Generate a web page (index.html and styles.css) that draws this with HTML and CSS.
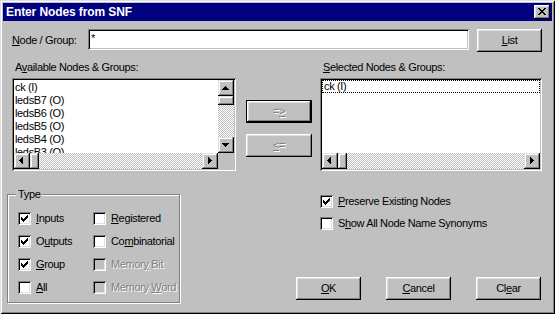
FILE: index.html
```html
<!DOCTYPE html>
<html>
<head>
<meta charset="utf-8">
<link rel="stylesheet" href="styles.css">
</head>
<body>
<div class="window">
  <div class="titlebar">
    <span class="title">Enter Nodes from SNF</span>
    <div class="close">
      <svg width="8" height="7" viewBox="0 0 8 7"><path d="M0 0h2v1H0z M6 0h2v1H6z M1 1h2v1H1z M5 1h2v1H5z M2 2h4v1H2z M3 3h2v1H3z M2 4h4v1H2z M1 5h2v1H1z M5 5h2v1H5z M0 6h2v1H0z M6 6h2v1H6z" fill="#000"/></svg>
    </div>
  </div>
  <div class="body">
    <div class="row1">
      <div class="lbl-node"><u>N</u>ode / Group:</div>
      <div class="input">*</div>
      <div class="btn btn-list"><span><u>L</u>ist</span></div>
    </div>
    <div class="row2">
      <div class="col-left">
        <div class="cap">A<u>v</u>ailable Nodes &amp; Groups:</div>
        <div class="listbox lb-left">
          <div class="items">
            <div class="item">ck (I)</div>
            <div class="item">ledsB7 (O)</div>
            <div class="item">ledsB6 (O)</div>
            <div class="item">ledsB5 (O)</div>
            <div class="item">ledsB4 (O)</div>
            <div class="item">ledsB3 (O)</div>
          </div>
          <div class="vscroll">
            <div class="sbtn"><svg width="16" height="16" viewBox="0 0 16 16"><path d="M7 6h1v1h1v1h1v1h1v1H4V9h1V8h1V7h1z" fill="#000"/></svg></div>
            <div class="thumb-v"></div>
            <div class="track"></div>
            <div class="sbtn"><svg width="16" height="16" viewBox="0 0 16 16"><path d="M4 6h7v1h-1v1h-1v1h-1v1h-1V9H6V8H5V7H4z" fill="#000"/></svg></div>
          </div>
          <div class="hscroll">
            <div class="sbtn"><svg width="16" height="16" viewBox="0 0 16 16"><path d="M9 4V11H8V10H7V9H6V8H5V7H6V6H7V5H8V4z" fill="#000"/></svg></div>
            <div class="thumb-h"></div>
            <div class="track"></div>
            <div class="sbtn"><svg width="16" height="16" viewBox="0 0 16 16"><path d="M6 4V11H7V10H8V9H9V8H10V7H9V6H8V5H7V4z" fill="#000"/></svg></div>
          </div>
          <div class="corner"></div>
        </div>
      </div>
      <div class="col-mid">
        <div class="btn btn-default disabled"><span>=<u>&gt;</u></span></div>
        <div class="btn disabled"><span><u>&lt;</u>=</span></div>
      </div>
      <div class="col-right">
        <div class="cap"><u>S</u>elected Nodes &amp; Groups:</div>
        <div class="listbox lb-right">
          <div class="items">
            <div class="item focus">ck (I)</div>
          </div>
          <div class="hscroll">
            <div class="sbtn"><svg width="16" height="16" viewBox="0 0 16 16"><path d="M9 4V11H8V10H7V9H6V8H5V7H6V6H7V5H8V4z" fill="#000"/></svg></div>
            <div class="thumb-h"></div>
            <div class="track"></div>
            <div class="sbtn"><svg width="16" height="16" viewBox="0 0 16 16"><path d="M6 4V11H7V10H8V9H9V8H10V7H9V6H8V5H7V4z" fill="#000"/></svg></div>
          </div>
        </div>
      </div>
    </div>
    <div class="row3">
      <div class="group">
        <span class="legend">Type</span>
        <div class="checks-grid">
          <div class="chk"><span class="box"><svg width="7" height="7" viewBox="0 0 7 7"><path d="M6 0h1v1H6z M5 1h2v1H5z M0 2h1v1H0z M4 2h3v1H4z M0 3h2v1H0z M3 3h3v1H3z M0 4h5v1H0z M1 5h3v1H1z M2 6h1v1H2z" fill="#000"/></svg></span><span><u>I</u>nputs</span></div>
          <div class="chk"><span class="box"></span><span><u>R</u>egistered</span></div>
          <div class="chk"><span class="box"><svg width="7" height="7" viewBox="0 0 7 7"><path d="M6 0h1v1H6z M5 1h2v1H5z M0 2h1v1H0z M4 2h3v1H4z M0 3h2v1H0z M3 3h3v1H3z M0 4h5v1H0z M1 5h3v1H1z M2 6h1v1H2z" fill="#000"/></svg></span><span>O<u>u</u>tputs</span></div>
          <div class="chk"><span class="box"></span><span>Co<u>m</u>binatorial</span></div>
          <div class="chk"><span class="box"><svg width="7" height="7" viewBox="0 0 7 7"><path d="M6 0h1v1H6z M5 1h2v1H5z M0 2h1v1H0z M4 2h3v1H4z M0 3h2v1H0z M3 3h3v1H3z M0 4h5v1H0z M1 5h3v1H1z M2 6h1v1H2z" fill="#000"/></svg></span><span><u>G</u>roup</span></div>
          <div class="chk disabled"><span class="box"></span><span>Memor<u>y</u> Bit</span></div>
          <div class="chk"><span class="box"></span><span><u>A</u>ll</span></div>
          <div class="chk disabled"><span class="box"></span><span>Memory <u>W</u>ord</span></div>
        </div>
      </div>
      <div class="right-panel">
        <div class="right-checks">
          <div class="chk"><span class="box"><svg width="7" height="7" viewBox="0 0 7 7"><path d="M6 0h1v1H6z M5 1h2v1H5z M0 2h1v1H0z M4 2h3v1H4z M0 3h2v1H0z M3 3h3v1H3z M0 4h5v1H0z M1 5h3v1H1z M2 6h1v1H2z" fill="#000"/></svg></span><span><u>P</u>reserve Existing Nodes</span></div>
          <div class="chk"><span class="box"></span><span>S<u>h</u>ow All Node Name Synonyms</span></div>
        </div>
        <div class="buttons">
          <div class="btn btn-bottom"><span><u>O</u>K</span></div>
          <div class="btn btn-bottom"><span><u>C</u>ancel</span></div>
          <div class="btn btn-bottom"><span>Cl<u>e</u>ar</span></div>
        </div>
      </div>
    </div>
  </div>
</div>
</body>
</html>
```
FILE: styles.css
```css
html, body {
  margin: 0;
  padding: 0;
  background: #c0c0c0;
}
body {
  font-family: "Liberation Sans", Arial, sans-serif;
  font-size: 11px;
  letter-spacing: -0.35px;
  color: #000;
}
u { text-decoration: underline; text-underline-offset: 1px; }

.window {
  width: 555px;
  height: 314px;
  box-sizing: border-box;
  padding: 3px;
  background: #c0c0c0;
  box-shadow: inset 1px 1px #dfdfdf, inset -1px -1px #000, inset 2px 2px #fff, inset -2px -2px #808080;
}
.titlebar {
  height: 18px;
  background: #000080;
  display: flex;
  align-items: center;
  justify-content: space-between;
  padding: 0 2px 0 3px;
}
.title {
  color: #fff;
  font-weight: bold;
  font-size: 12px;
  letter-spacing: -0.1px;
}
.close {
  width: 16px;
  height: 14px;
  box-sizing: border-box;
  background: #c0c0c0;
  box-shadow: inset -1px -1px #000, inset 1px 1px #fff, inset -2px -2px #808080, inset 2px 2px #dfdfdf;
  display: flex;
  align-items: center;
  justify-content: center;
  padding: 0 1px 1px 0;
}
.close svg { display: block; }

.body {
  padding: 8px 0 0 4px;
}

.row1 {
  display: flex;
  align-items: flex-start;
  padding-left: 5px;
}
.lbl-node {
  width: 76px;
  line-height: 13px;
  margin-top: 5px;
}
.input {
  width: 381px;
  height: 21px;
  box-sizing: border-box;
  background: #fff;
  box-shadow: inset 1px 1px #808080, inset -1px -1px #fff, inset 2px 2px #000, inset -2px -2px #c0c0c0;
  padding: 3px 0 0 3px;
  line-height: 13px;
}

.btn {
  box-sizing: border-box;
  height: 23px;
  background: #c0c0c0;
  box-shadow: inset -1px -1px #000, inset 1px 1px #fff, inset -2px -2px #808080, inset 2px 2px #dfdfdf;
  display: flex;
  align-items: center;
  justify-content: center;
  line-height: 13px;
}
.btn-list {
  width: 65px;
  margin-left: 8px;
}
.btn.disabled span {
  color: #808080;
  text-shadow: 1px 1px #fff;
}
.btn-default {
  box-shadow: inset 0 0 0 1px #000, inset -2px -2px #000, inset 2px 2px #fff, inset -3px -3px #808080, inset 3px 3px #dfdfdf;
}

.row2 {
  display: flex;
  align-items: flex-start;
  margin-top: 9px;
  padding-left: 5px;
}
.cap {
  line-height: 13px;
  height: 13px;
  margin: 0 0 4px 3px;
}
.col-left { width: 224px; }
.col-mid {
  width: 66px;
  margin-left: 10px;
  padding-top: 39px;
  display: flex;
  flex-direction: column;
  gap: 11px;
}
.col-right {
  width: 222px;
  margin-left: 8px;
}

.listbox {
  height: 93px;
  box-sizing: border-box;
  padding: 2px;
  background: #fff;
  box-shadow: inset 1px 1px #808080, inset -1px -1px #fff, inset 2px 2px #000, inset -2px -2px #c0c0c0;
  display: grid;
  grid-template-rows: 1fr 16px;
}
.lb-left { grid-template-columns: 1fr 16px; }
.lb-right { grid-template-columns: 1fr; }
.items {
  overflow: hidden;
  line-height: 13px;
  padding: 1px 0 0 1px;
  white-space: nowrap;
}
.item { height: 13px; }
.item.focus {
  box-sizing: border-box;
  border: 1px dotted #000;
  line-height: 11px;
  margin: -1px 0 0 -1px;
  padding-left: 1px;
}
.vscroll {
  display: grid;
  grid-template-rows: 16px 9px 1fr 16px;
}
.hscroll {
  display: grid;
  grid-template-columns: 16px 9px 1fr 16px;
}
.sbtn, .thumb-v, .thumb-h, .corner {
  background: #c0c0c0;
}
.sbtn, .thumb-v, .thumb-h {
  box-shadow: inset -1px -1px #000, inset 1px 1px #dfdfdf, inset -2px -2px #808080, inset 2px 2px #fff;
}
.sbtn svg { display: block; }
.track {
  background: repeating-conic-gradient(#c0c0c0 0% 25%, #fff 0% 50%) 0 0 / 2px 2px;
}

.row3 {
  display: flex;
  align-items: stretch;
  margin-top: 23px;
}
.group {
  position: relative;
  width: 173px;
  height: 109px;
  box-sizing: border-box;
  border: 1px solid #808080;
  box-shadow: inset 1px 1px #fff, 1px 1px #fff;
}
.legend {
  position: absolute;
  left: 8px;
  top: -7px;
  padding: 0 2px 0 2px;
  background: #c0c0c0;
  line-height: 13px;
}
.checks-grid {
  display: grid;
  grid-template-columns: 75px auto;
  row-gap: 10px;
  padding: 17px 0 0 10px;
}
.chk {
  display: flex;
  align-items: center;
  gap: 5px;
  height: 13px;
  line-height: 13px;
  white-space: nowrap;
}
.box {
  width: 13px;
  height: 13px;
  flex: none;
  box-sizing: border-box;
  background: #fff;
  box-shadow: inset 1px 1px #808080, inset -1px -1px #fff, inset 2px 2px #000, inset -2px -2px #dfdfdf;
  display: flex;
  padding: 3px 0 0 3px;
}
.box svg { display: block; }
.chk.disabled .box { background: #c0c0c0; }
.chk.disabled span:last-child {
  color: #808080;
  text-shadow: 1px 1px #fff;
}

.right-panel {
  margin-left: 116px;
  width: 246px;
  display: flex;
  flex-direction: column;
  justify-content: space-between;
  padding-bottom: 3px;
}
.right-checks {
  display: flex;
  flex-direction: column;
  gap: 9px;
  padding: 1px 0 0 24px;
}
.buttons {
  display: flex;
  gap: 25px;
}
.btn-bottom { width: 65px; }
```
